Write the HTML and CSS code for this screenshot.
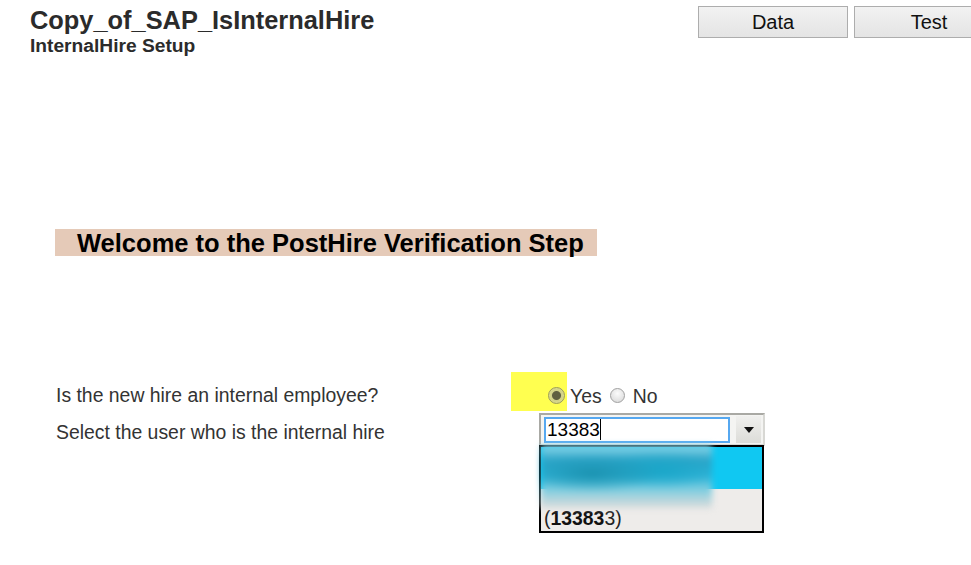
FILE: index.html
```html
<!DOCTYPE html>
<html lang="en">
<head>
    <meta charset="UTF-8">
    <meta name="viewport" content="width=device-width, initial-scale=1.0">
    <title>Copy_of_SAP_IsInternalHire</title>
    <link rel="stylesheet" href="styles.css">
</head>
<body>
    <div class="header">
        <div class="titles">
            <h1>Copy_of_SAP_IsInternalHire</h1>
            <h2>InternalHire Setup</h2>
        </div>
        <div class="actions">
            <button class="btn">Data</button>
            <button class="btn">Test</button>
        </div>
    </div>

    <div class="banner">Welcome to the PostHire Verification Step</div>

    <div class="form">
        <div class="label">Is the new hire an internal employee?</div>
        <div class="radios">
            <span class="mark">
                <span class="radio checked"></span>
            </span>
            <span class="opt yes">Yes</span>
            <span class="radio"></span>
            <span class="opt no">No</span>
        </div>

        <div class="label">Select the user who is the internal hire</div>
        <div class="combo-wrap">
            <div class="combo">
                <div class="combo-input">13383<span class="caret"></span></div>
                <div class="combo-btn"><span class="arrow"></span></div>
            </div>
            <div class="suggest">
                <div class="item active"></div>
                <div class="item">(<b>13383</b>3)</div>
                <div class="blur"></div>
            </div>
        </div>
    </div>
</body>
</html>
```

FILE: styles.css
```css
html, body {
    margin: 0;
    padding: 0;
    background: #fff;
    font-family: "Liberation Sans", Arial, sans-serif;
    color: #333;
}
body {
    min-height: 100vh;
}
.header {
    display: flex;
    padding: 6px 0 0 30px;
}
.titles {
    width: 668px;
    flex-shrink: 0;
}
h1 {
    margin: 0;
    font-size: 25.4px;
    line-height: 29px;
    font-weight: bold;
    color: #2b2b2b;
}
h2 {
    margin: 0;
    font-size: 19.2px;
    line-height: 21px;
    font-weight: bold;
    color: #2b2b2b;
}
.actions {
    display: flex;
    gap: 6px;
    width: 273px;
    overflow: hidden;
    flex-shrink: 0;
}
.btn {
    width: 150px;
    height: 32px;
    padding: 0;
    flex-shrink: 0;
    border: 1px solid #adadad;
    background: linear-gradient(#f2f2f2, #e4e4e4);
    font-family: "Liberation Sans", Arial, sans-serif;
    font-size: 20px;
    color: #111;
}
.banner {
    margin: 173px 0 0 55px;
    width: 542px;
    height: 27px;
    box-sizing: border-box;
    padding-left: 22px;
    background: #e5cab8;
    color: #000;
    font-size: 25.5px;
    font-weight: bold;
    line-height: 29px;
    white-space: nowrap;
}
.form {
    display: grid;
    grid-template-columns: 455px auto;
    margin: 116px 0 0 56px;
    font-size: 19.4px;
}
.label {
    display: flex;
    align-items: center;
    height: 36px;
    color: #333;
    padding-top: 3px;
    box-sizing: border-box;
}
.form .label:first-child {
    height: 41px;
    padding-top: 5px;
}
.radios {
    display: flex;
    align-items: center;
    height: 41px;
}
.mark {
    display: flex;
    align-items: center;
    justify-content: flex-end;
    width: 56px;
    height: 39px;
    align-self: flex-start;
    background: #ffff50;
    box-sizing: border-box;
    padding-right: 2px;
    padding-top: 8px;
}
.radio {
    display: inline-block;
    width: 15px;
    height: 15px;
    border-radius: 50%;
    border: 1px solid #a0a0a0;
    background: radial-gradient(circle at 50% 35%, #fbfbfb, #d6d6d6);
    box-sizing: border-box;
    margin-top: 5px;
}
.radio.checked {
    width: 17px;
    height: 17px;
    border-color: #9a9a5c;
    background: radial-gradient(circle, #5e5e40 0 4px, #cfcf88 5px, #e8e890 100%);
    margin-top: 0;
}
.opt {
    padding-top: 7px;
}
.opt.yes {
    margin: 0 8px 0 3px;
}
.opt.no {
    margin-left: 8px;
}
.combo-wrap {
    position: relative;
    margin-left: 28px;
}
.combo {
    display: flex;
    align-items: center;
    width: 226px;
    height: 33px;
    box-sizing: border-box;
    border: 2px solid #a9a9a4;
    border-bottom-color: #d8d8d4;
    border-right-color: #d8d8d4;
    padding: 0 2px 0 3px;
    gap: 6px;
    background: #f4f4f2;
}
.combo-input {
    display: flex;
    align-items: center;
    width: 187px;
    height: 26px;
    box-sizing: border-box;
    border: 2px solid #56a8f0;
    background: #fff;
    color: #000;
    font-size: 19px;
    padding-left: 1px;
}
.caret {
    display: inline-block;
    width: 1px;
    height: 21px;
    background: #000;
}
.combo-btn {
    display: flex;
    align-items: center;
    justify-content: center;
    width: 25px;
    height: 27px;
    background: linear-gradient(#f0f0ee, #dcdcd8);
}
.arrow {
    width: 0;
    height: 0;
    border-left: 5px solid transparent;
    border-right: 5px solid transparent;
    border-top: 6px solid #111;
}
.suggest {
    position: absolute;
    left: 0;
    top: 32px;
    width: 225px;
    border: 2px solid #000;
    box-sizing: border-box;
    background: #eeecea;
}
.item {
    height: 42px;
    box-sizing: border-box;
    padding: 19px 0 0 3px;
    font-size: 19.4px;
    line-height: 20px;
    color: #222;
}
.item.active {
    background: #10c8f2;
}
.item b {
    color: #111;
}
.blur {
    position: absolute;
    left: 0;
    top: -2px;
    width: 171px;
    height: 63px;
    background:
        radial-gradient(ellipse 40% 30% at 30% 45%, #1b92b0, transparent),
        radial-gradient(ellipse 35% 30% at 70% 40%, #1aa6c8, transparent),
        linear-gradient(180deg, #8fd8ea 0%, #2aa4c8 25%, #2fb4d8 50%, #7ccde0 70%, #bfd7dc 90%, #d9dcdc 100%);
    filter: blur(3px);
}
```
